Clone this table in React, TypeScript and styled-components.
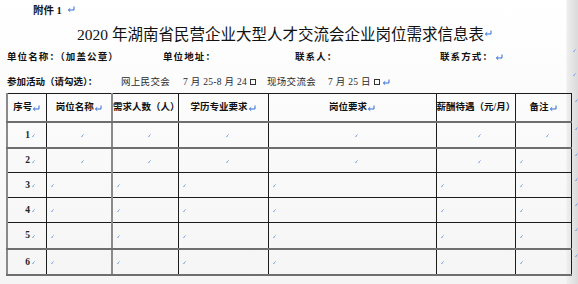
import React from "react";
import styled, { createGlobalStyle } from "styled-components";

const GlobalStyle = createGlobalStyle`
  html, body { margin: 0; padding: 0; }
  body {
    width: 578px;
    height: 284px;
    overflow: hidden;
    font-family: "Liberation Serif", "Noto Sans CJK SC", serif;
    color: #151515;
  }
`;

const Page = styled.div`
  width: 578px;
  height: 284px;
  overflow: hidden;
  display: flex;
  flex-direction: column;
  background:
    linear-gradient(90deg, rgba(0, 0, 0, 0) 566px, #eeeeee 567px, #dadada 578px),
    linear-gradient(180deg, #ffffff 0%, #f5f5f5 100%);
`;

const Annex = styled.div`
  height: 18px;
  padding-left: 33px;
  display: flex;
  align-items: center;
  gap: 5px;
  font-size: 10.5px;
  font-weight: 700;
  white-space: nowrap;
`;

const Title = styled.h1`
  margin: 0;
  height: 30px;
  padding-left: 77px;
  display: flex;
  align-items: center;
  font-size: 15.5px;
  font-weight: 400;
  color: #111;
  white-space: nowrap;
`;

const InfoRow = styled.div<{ $cols: string; $h: number; $pt: number }>`
  height: ${(p) => p.$h}px;
  box-sizing: border-box;
  padding: ${(p) => p.$pt}px 0 0 7px;
  display: grid;
  grid-template-columns: ${(p) => p.$cols};
  align-items: start;
  font-size: 9.5px;
  line-height: ${(p) => p.$h - p.$pt - (p.$pt ? 1 : 0)}px;
  white-space: nowrap;
`;

const Label = styled.span<{ $bold?: boolean; $spacing?: number }>`
  font-weight: ${(p) => (p.$bold ? 700 : 400)};
  letter-spacing: ${(p) => p.$spacing ?? 0.3}px;
  color: ${(p) => (p.$bold ? "#111" : "#2a2a2a")};
  display: inline-flex;
  align-items: center;
  gap: 2px;
`;

const RowEnd = styled.span`
  margin-top: 1px;
  padding-left: 3px;
  line-height: 0;
`;

const Box = styled.span`
  display: inline-block;
  width: 4px;
  height: 4px;
  border: 1px solid #333;
  margin-left: 1px;
`;

const Table = styled.table`
  border-collapse: collapse;
  table-layout: fixed;
  margin-left: 6px;
  width: 572px;
  font-size: 9.5px;
`;

const Cell = styled.td<{ $align?: "left" | "center"; $grayLeft?: boolean; $num?: boolean }>`
  border: 1px solid #1c1c1c;
  ${(p) => (p.$grayLeft ? "border-left: 2px solid #8a8a8a;" : "")}
  padding: 0 0 0 ${(p) => (p.$num ? 7 : p.$align === "left" ? 4 : 8)}px;
  text-align: ${(p) => p.$align ?? "center"};
  vertical-align: middle;
  line-height: 10px;
  white-space: nowrap;
  overflow: visible;
  font-weight: ${(p) => (p.$num ? 700 : 400)};
  color: #222;
`;

const HeadCell = styled(Cell)`
  padding: 0;
  font-weight: 700;
  color: #111;
`;

const EndCell = styled.td`
  border: none;
  padding: 5px 0 0 3px;
  vertical-align: top;
  line-height: 0;
`;

const Row = styled.tr<{ $h: number; $heavy?: boolean }>`
  height: ${(p) => p.$h}px;
  & > ${Cell} {
    ${(p) => (p.$heavy ? "border-bottom: 2px solid #6e6e6e;" : "")}
  }
`;

const MarkSvg = styled.svg`
  display: inline-block;
  vertical-align: middle;
  fill: none;
  stroke: #6d9de6;
  stroke-width: 0.8;
`;

const ReturnSvg = styled.svg`
  display: inline-block;
  vertical-align: middle;
  fill: none;
  stroke: #2f6bd4;
  stroke-width: 1;
  flex-shrink: 0;
`;

const CellMark = () => (
  <MarkSvg width={3} height={3} viewBox="0 0 3 3">
    <path d="M2.7 0.3 L0.4 2.6 M0.4 2.6 H1.6" />
  </MarkSvg>
);

const Ret = () => (
  <ReturnSvg width={8} height={7} viewBox="0 0 8 7">
    <path d="M7 0.5 V4 H1.5 M3.2 2.3 L1.4 4 L3.2 5.7" />
  </ReturnSvg>
);

const colWidths = [39, 66, 66, 90, 168, 79, 56, 8];

const headers: { text: string; mark: boolean }[] = [
  { text: "序号", mark: true },
  { text: "岗位名称", mark: true },
  { text: "需求人数（人）", mark: false },
  { text: "学历专业要求", mark: true },
  { text: "岗位要求", mark: true },
  { text: "薪酬待遇（元/月）", mark: false },
  { text: "备注", mark: true },
];

const rows: { n: number; h: number; heavy?: boolean; aligns: ("left" | "center")[] }[] = [
  { n: 1, h: 26, heavy: true, aligns: ["center", "center", "center", "center", "center", "center"] },
  { n: 2, h: 25, aligns: ["center", "center", "center", "center", "center", "left"] },
  { n: 3, h: 25, aligns: ["left", "left", "left", "left", "left", "left"] },
  { n: 4, h: 25, aligns: ["left", "left", "left", "left", "left", "left"] },
  { n: 5, h: 26, heavy: true, aligns: ["left", "left", "left", "left", "left", "left"] },
  { n: 6, h: 26, heavy: true, aligns: ["left", "left", "left", "left", "left", "left"] },
];

export default function App() {
  return (
    <>
      <GlobalStyle />
      <Page>
        <Annex>
          <span>附件 1</span>
          <Ret />
        </Annex>
        <Title>
          2020 年湖南省民营企业大型人才交流会企业岗位需求信息表
          <Ret />
        </Title>
        <InfoRow $cols="156px 132px 145px 1fr 8px" $h={18} $pt={0}>
          <Label $bold $spacing={1.1}>单位名称：（加盖公章）</Label>
          <Label $bold $spacing={1.1}>单位地址：</Label>
          <Label $bold $spacing={1.1}>联系人：</Label>
          <Label $bold $spacing={1.1}>
            联系方式：
            <Ret />
          </Label>
          <RowEnd>
            <CellMark />
          </RowEnd>
        </InfoRow>
        <InfoRow $cols="114px 62px 84px 61px 1fr 8px" $h={27} $pt={6}>
          <Label $bold $spacing={0}>参加活动（请勾选）：</Label>
          <Label>网上民交会</Label>
          <Label>
            7 月 25-8 月 24
            <Box />
          </Label>
          <Label>现场交流会</Label>
          <Label>
            7 月 25 日 <Box />
            <Ret />
          </Label>
          <RowEnd>
            <CellMark />
          </RowEnd>
        </InfoRow>
        <Table>
          <colgroup>
            {colWidths.map((w, i) => (
              <col key={i} style={{ width: w }} />
            ))}
          </colgroup>
          <tbody>
            <Row $h={28} $heavy>
              {headers.map((h, i) => (
                <HeadCell key={h.text} $grayLeft={i === 0 || i === 2}>
                  {h.text}
                  {h.mark && <Ret />}
                </HeadCell>
              ))}
              <EndCell>
                <CellMark />
              </EndCell>
            </Row>
            {rows.map((r) => (
              <Row key={r.n} $h={r.h} $heavy={r.heavy}>
                <Cell $num $grayLeft>
                  {r.n} <CellMark />
                </Cell>
                {r.aligns.map((a, i) => (
                  <Cell key={i} $align={a} $grayLeft={i === 1}>
                    <CellMark />
                  </Cell>
                ))}
                <EndCell>
                  <CellMark />
                </EndCell>
              </Row>
            ))}
          </tbody>
        </Table>
      </Page>
    </>
  );
}
